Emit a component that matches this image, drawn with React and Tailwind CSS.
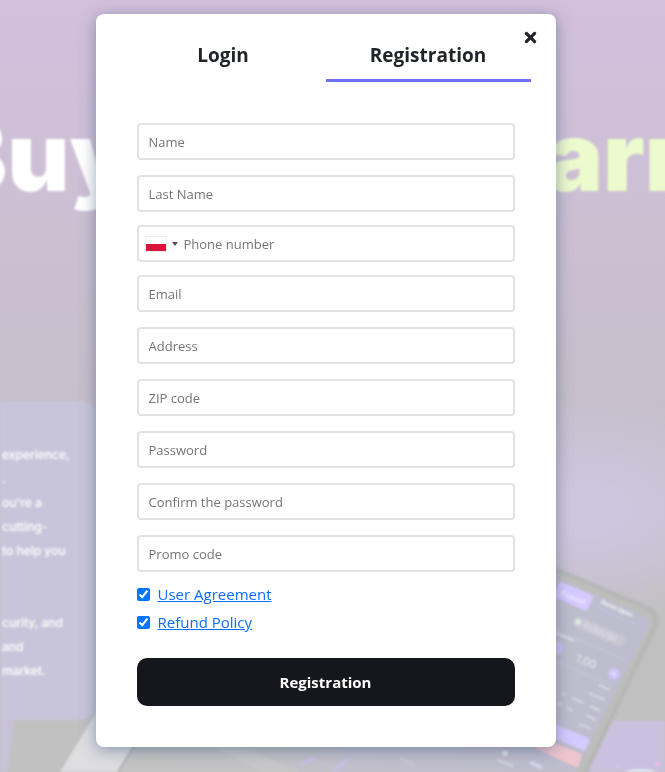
import React, { useState } from "react";
import { FaTimes } from "react-icons/fa";

const fields = [
  { id: "name", label: "Name", type: "text", gap: "mb-[15px]" },
  { id: "lastName", label: "Last Name", type: "text", gap: "mb-[13px]" },
  { id: "phone", label: "Phone number", type: "tel", gap: "mb-[13px]" },
  { id: "email", label: "Email", type: "email", gap: "mb-[15px]" },
  { id: "address", label: "Address", type: "text", gap: "mb-[15px]" },
  { id: "zip", label: "ZIP code", type: "text", gap: "mb-[15px]" },
  { id: "password", label: "Password", type: "password", gap: "mb-[15px]" },
  { id: "confirm", label: "Confirm the password", type: "password", gap: "mb-[15px]" },
  { id: "promo", label: "Promo code", type: "text", gap: "mb-2" },
];

const agreements = [
  { id: "agreement", label: "User Agreement" },
  { id: "refund", label: "Refund Policy" },
];

const aboutLines = [
  "experience,",
  ".",
  "ou're a",
  "cutting-",
  "to help you",
  "",
  "",
  "curity, and",
  "and",
  "market.",
];

const LaptopArt = () => (
  <svg className="absolute top-[700px] left-0 h-[72px] w-[600px]" viewBox="0 700 600 72">
    <defs>
      <linearGradient id="deck">
        <stop offset="0" stopColor="#c4c4c4" />
        <stop offset="0.3" stopColor="#c4c4c6" />
        <stop offset="0.5" stopColor="#c2c0ce" />
        <stop offset="1" stopColor="#bfbecb" />
      </linearGradient>
    </defs>
    <path d="M0 700H600V772H0Z" fill="#c1c1c1" />
    <path d="M0 720H14L8 772H0Z" fill="#c7c2d6" />
    <path d="M60 772L104 700H160L118 772Z" fill="#dedee1" />
    <path d="M118 772L140 736H600V772Z" fill="url(#deck)" />
    <path d="M118 772L140 736" stroke="#b2b3b6" strokeWidth="2" />
    <path d="M210 746L262 772H300L240 746Z" fill="#c8c8c9" />
    <path d="M302 764L315 758M334 770L348 760" stroke="#c8c1e4" strokeWidth="4" />
    <path d="M400 758L414 765" stroke="#cac9d6" strokeWidth="2" />
  </svg>
);

const PhoneArt = () => (
  <svg
    className="absolute top-[540px] right-0 h-[232px] w-[180px]"
    viewBox="485 540 180 232"
    fontFamily="Inter, sans-serif"
  >
    <path d="M570 721H665V772H570Z" fill="#cac1df" />
    <path d="M500 541L553 566L648 606Q662 612 657 628L588 772H500Z" fill="#b6b7b5" />
    <path d="M500 545L553 570L645 609Q657 615 653 627L583 772H500Z" fill="#bdbebb" />
    <path d="M500 550L553 576L644 615Q652 619 649 627L576 772H500Z" fill="#bebdcd" />
    <g transform="translate(560 581) rotate(24)">
      <rect width="37" height="17" rx="3" fill="#d5caff" />
      <text x="6" y="12" fontSize="7" fontWeight="600" fill="#f0ecff">Deposit</text>
      <text x="46" y="4" fontSize="6" fontWeight="700" fill="#f4f4f8">Demo Open</text>
      <path d="M45 9H87" stroke="#c9c0f0" strokeWidth="1" />
    </g>
    <g transform="translate(578 622) rotate(24)">
      <rect x="-5" y="-6" width="56" height="12" rx="6" fill="#c7c6d2" />
      <circle r="3" fill="#dbe6dd" />
      <text x="7" y="3" fontSize="8" fill="#e6e6ec">EUR/USD</text>
    </g>
    <path d="M556 630L626 660M556 661L612 686" stroke="#c9c8dc" />
    <path d="M556 633L574 641" stroke="#dedee9" strokeWidth="2" />
    <circle cx="557" cy="648" r="6" fill="#cdc4f6" />
    <circle cx="614" cy="674" r="6" fill="#cdc4f6" />
    <path d="M611 673L617 675M614 671V677" stroke="#eeeaff" />
    <text transform="translate(575 661) rotate(22)" fontSize="11" fill="#ececf3">1.00</text>
    <g stroke="#d6d6e2" strokeWidth="2">
      <path d="M599 685L610 690M589 693L605 700M590 706L600 711M572 698L584 703M562 693L566 695M586 715L596 720M567 707L573 711M558 703L562 705M579 724L591 729" />
    </g>
    <path d="M550 722L588 738Q590 740 589 742L585 751L545 734Z" fill="#d5caff" />
    <path d="M545 740L582 754L578 768L535 748Z" fill="#efc6cf" />
    <circle cx="505" cy="753" r="3" fill="#e2e5ea" />
    <path d="M498 760L513 766" stroke="#d6d6e0" strokeWidth="2" />
    <path d="M530 762L542 768" stroke="#d6d3e8" strokeWidth="4" />
    <path d="M625 772Q630 769 640 769T658 772Z" fill="#e3eef8" />
    <circle cx="657" cy="764" r="2" fill="#f4b8ec" />
    <circle cx="618" cy="766" r="1" fill="#b4e2ee" />
  </svg>
);

const Backdrop = () => (
  <div
    aria-hidden="true"
    className="absolute inset-0 overflow-hidden bg-linear-to-b from-[#d2c0de] via-[#c8bfcc] via-45% to-[#c0c0c0] to-80% font-[Inter,sans-serif]"
  >
    <div className="absolute inset-0 bg-[radial-gradient(200px_115px_at_88%_510px,#cec5df_20%,transparent)]" />
    <div className="absolute inset-0 blur-[1px]">
      <LaptopArt />
      <PhoneArt />
      <div className="absolute top-[401px] left-0 w-[102px] rounded-r-3xl bg-[#c8c5da] pt-[42px] pb-[37px] text-xs leading-6 font-medium text-white">
        {aboutLines.map((line, i) => (
          <p key={i} className="h-6 pl-0.5 leading-6 whitespace-nowrap">
            {line}
          </p>
        ))}
      </div>
      <div className="-mr-[42px] -ml-[57px] flex justify-between pt-[98px] text-8xl leading-[116px] font-black">
        <span className="text-white">Buy</span>
        <span className="text-[#ecfbcd]">Earn</span>
      </div>
    </div>
  </div>
);

const PhonePrefix = () => (
  <button
    type="button"
    aria-label="Poland"
    className="flex h-full shrink-0 items-center gap-[6px] pr-[6px] pl-[7px]"
  >
    <svg width="20" height="14" viewBox="0 0 20 14" className="shadow-[0_0_1px_#888]">
      <path d="M0 0H20V7H0Z" fill="#fff" />
      <path d="M0 7H20V14H0Z" fill="#dc143c" />
    </svg>
    <svg width="6" height="4" viewBox="0 0 6 4">
      <path d="M0 0H6L3 4Z" fill="#555" />
    </svg>
  </button>
);

const Field = ({ field }) => (
  <div
    className={`flex h-[37px] items-center rounded-sm border-2 border-[#e2e2e2] bg-white ${field.gap}`}
  >
    {field.id === "phone" && <PhonePrefix />}
    <input
      id={field.id}
      type={field.type}
      placeholder={field.label}
      aria-label={field.label}
      className={`h-full w-full min-w-0 text-[13px] text-[#212529] outline-none placeholder:text-[#757575] ${
        field.id === "phone" ? "" : "px-[10px]"
      }`}
    />
  </div>
);

export default function App() {
  const [tab, setTab] = useState("Registration");
  const [checked, setChecked] = useState({ agreement: true, refund: true });

  return (
    <div className="relative min-h-screen pt-[14px] pr-[30px] pb-[25px] pl-4 font-['Open_Sans','Noto_Sans',sans-serif] text-[#212529]">
      <Backdrop />

      <div className="relative mx-auto w-full max-w-[460px] rounded-lg bg-white px-[25px] pt-[15px] pb-[41px] shadow-[0_3px_16px_rgba(70,85,120,0.55)]">
        <button type="button" aria-label="Close" className="absolute top-[15px] right-[17px]">
          <FaTimes size={17} />
        </button>

        {/* Tabs */}
        <div className="flex">
          {["Login", "Registration"].map((name) => (
            <button
              key={name}
              type="button"
              onClick={() => setTab(name)}
              className={`h-[53px] flex-1 border-b-3 pt-0.5 text-[19px] font-bold ${
                tab === name ? "border-[#6c6fff]" : "border-transparent"
              }`}
            >
              {name}
            </button>
          ))}
        </div>

        {/* Form */}
        <form className="px-4 pt-[41px]" onSubmit={(e) => e.preventDefault()}>
          {fields.map((field) => (
            <Field key={field.id} field={field} />
          ))}

          {agreements.map((item) => (
            <div key={item.id} className="flex h-7 items-center gap-2">
              <input
                id={item.id}
                type="checkbox"
                aria-label={item.label}
                checked={checked[item.id]}
                onChange={(e) => setChecked({ ...checked, [item.id]: e.target.checked })}
                className="size-[13px] accent-[#0075ff]"
              />
              <a href="#" className="text-[15px] leading-6 text-[#0d6efd] underline">
                {item.label}
              </a>
            </div>
          ))}

          <button
            type="submit"
            className="mt-[22px] h-12 w-full rounded-[10px] bg-[#16171c] text-[15px] font-bold text-white"
          >
            Registration
          </button>
        </form>
      </div>
    </div>
  );
}
